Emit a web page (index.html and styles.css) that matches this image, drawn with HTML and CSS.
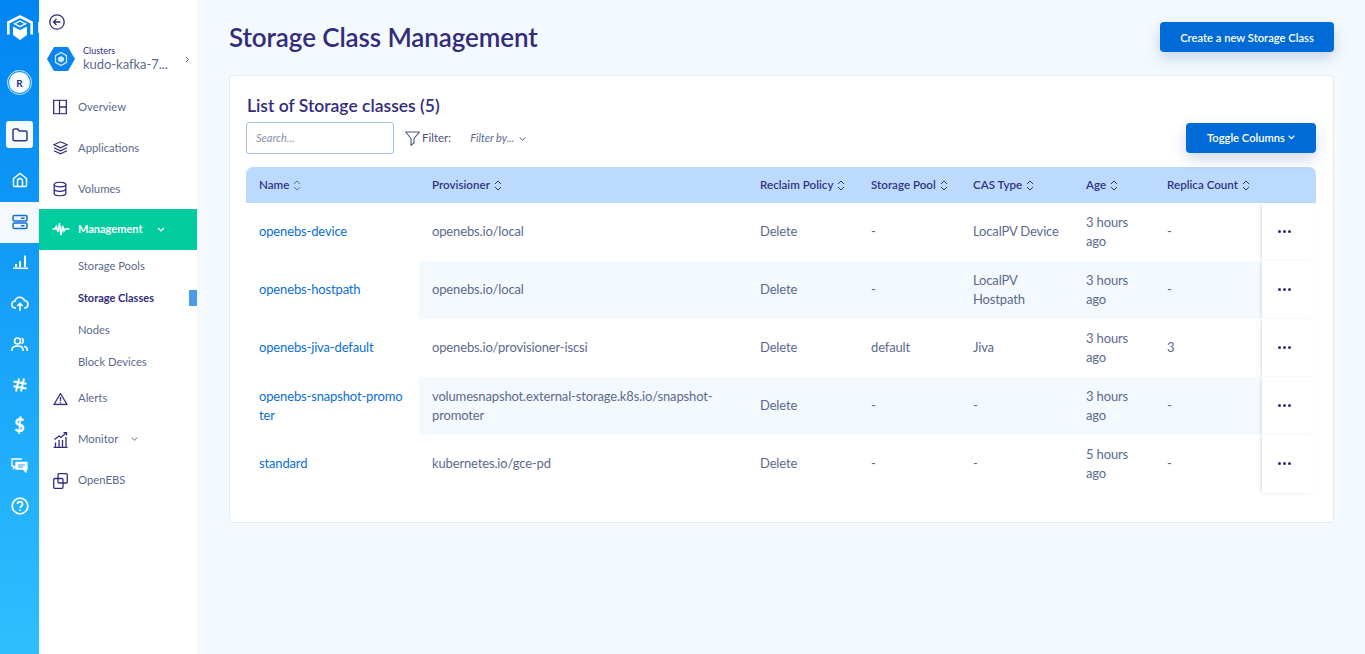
FILE: index.html
```html
<!DOCTYPE html>
<html lang="en">
<head>
<meta charset="utf-8">
<title>Storage Class Management</title>
<link rel="stylesheet" href="styles.css">
</head>
<body>
<div class="app">
  <aside class="rail">
    <div class="rail-logo">
      <svg width="26" height="26" viewBox="0 0 26 26"><path d="M1.300 19.500V7.500L13 1.500l11.700 6v12" fill="none" stroke="#fff" stroke-width="2.600"/><path d="M6 11.500l7 3.600 7-3.600V20l-7 5-7-5z" fill="#fff"/><path d="M7.500 8.800L13 6l5.500 2.800L13 11.600z" fill="none" stroke="#fff" stroke-width="1.400"/></svg>
    </div>
    <div class="rail-avatar"><span class="avatar-face">R</span></div>
    <a class="rail-folder">
      <svg width="16" height="14" viewBox="0 0 16 14"><path d="M1 2.500C1 1.600 1.600 1 2.500 1h3.200l1.600 2h6.200c.9 0 1.500.6 1.500 1.500v6.800c0 .9-.6 1.500-1.500 1.500h-10C1.600 12.800 1 12.200 1 11.300z" fill="none" stroke="#3b3680" stroke-width="1.500"/></svg>
    </a>
    <a class="rail-item">
      <svg width="16" height="16" viewBox="0 0 16 16" fill="none" stroke="#fff" stroke-width="1.500"><path d="M1.500 6.500L8 1.500l6.500 5v7a1 1 0 0 1-1 1h-11a1 1 0 0 1-1-1z"/><path d="M5.500 14.500V9a2.500 2.500 0 0 1 5 0v5.500"/></svg>
    </a>
    <a class="rail-item rail-active">
      <svg width="16" height="16" viewBox="0 0 16 16" fill="none" stroke="#0f6fd8" stroke-width="1.500"><rect x="1" y="1.500" width="14" height="5.500" rx="1.500"/><rect x="1" y="9" width="14" height="5.500" rx="1.500"/><path d="M9 4.200h3.500M9 11.800h3.500"/></svg>
    </a>
    <a class="rail-item">
      <svg width="16" height="16" viewBox="0 1 16 16" fill="#fff"><rect x="1" y="13.500" width="15" height="1.500"/><rect x="3" y="10" width="2" height="3"/><rect x="7" y="7" width="2" height="6"/><rect x="12" y="1.500" width="2" height="11.500"/></svg>
    </a>
    <a class="rail-item">
      <svg width="18" height="16" viewBox="0 0 18 16" fill="none" stroke="#fff" stroke-width="1.600"><path d="M5 12H4.500a3.500 3.500 0 0 1-.5-7A5 5 0 0 1 13.500 4.500a3.800 3.800 0 0 1 .5 7.500h-1"/><path d="M9 15V7.500M6.300 10L9 7.300 11.700 10"/></svg>
    </a>
    <a class="rail-item">
      <svg width="17" height="15" viewBox="0 0 17 15" fill="none" stroke="#fff" stroke-width="1.600"><circle cx="6.500" cy="4" r="3"/><path d="M1 14v-1.500c0-2 2-3.500 5.500-3.500s5.500 1.500 5.500 3.500V14"/><path d="M10.500 1.200a3 3 0 0 1 0 5.600M13 9.200c2 .4 3.200 1.600 3.200 3.300V14"/></svg>
    </a>
    <a class="rail-item">
      <svg width="16" height="16" viewBox="0 0 16 16" fill="none" stroke="#fff" stroke-width="2"><path d="M7 1.500L4 14.500M12 1.500L9 14.500M1.500 4.500l13 2.200M1.500 9.300l13 2.200"/></svg>
    </a>
    <a class="rail-item rail-dollar">$</a>
    <a class="rail-item">
      <svg width="17" height="15" viewBox="0 0 17 15" fill="none" stroke="#fff" stroke-width="1.300"><path d="M11 1H1v7h1.500v2.500L5 8"/><path d="M5 4.500h11V11h-1v3l-3-3H5z" fill="#fff"/><path d="M7 7h7M7 9h5" stroke="#1fa5fb" stroke-width="1"/></svg>
    </a>
    <a class="rail-item">
      <svg width="18" height="18" viewBox="0 0 18 18" fill="none" stroke="#fff" stroke-width="1.700"><circle cx="9" cy="9" r="7.800"/><path d="M6.500 7a2.500 2.500 0 1 1 3.700 2.200c-.8.500-1.200 1-1.200 1.800"/><path d="M9 12.600v1.400"/></svg>
    </a>
  </aside>
  <span class="rail-handle"></span>

  <nav class="side">
    <div class="side-back">
      <svg width="16" height="16" viewBox="0 0 16 16" fill="none" stroke="#312d7c" stroke-width="1.300"><circle cx="8" cy="8" r="7.200"/><path d="M11.500 8h-7M7.500 5L4.500 8l3 3"/></svg>
    </div>
    <div class="cluster">
      <svg class="cluster-hex" width="28" height="24" viewBox="0 0 28 24"><path d="M7 0h14l7 12-7 12H7L0 12z" fill="#0a84ee"/><path d="M14 5.500l5.500 3.200v6.600L14 18.500l-5.500-3.200V8.700z" fill="none" stroke="#d5ebff" stroke-width="1.200"/><path d="M14 9l3 1.700v3L14 15.500l-3-1.800v-3z" fill="#cfe7ff"/></svg>
      <div class="cluster-text">
        <span class="cluster-label">Clusters</span>
        <span class="cluster-name">kudo-kafka-7...</span>
      </div>
      <svg class="cluster-chevron" width="5" height="7" viewBox="0 0 5 7" fill="none" stroke="#5c6a8e" stroke-width="1"><path d="M1 1l2.500 2.500L1 6"/></svg>
    </div>
    <ul class="side-list">
      <li class="side-item">
        <svg class="side-icon" width="14" height="15" viewBox="0 0 14 15" fill="none" stroke="#312d7c" stroke-width="1.300"><rect x=".7" y=".7" width="12.600" height="13.600"/><path d="M6.500 .7v13.600M6.500 7.500h6.800"/></svg>
        <span>Overview</span>
      </li>
      <li class="side-item">
        <svg class="side-icon" width="15" height="14" viewBox="0 0 15 14" fill="none" stroke="#312d7c" stroke-width="1.200"><path d="M7.500 .8l6.500 3-6.500 3-6.500-3z"/><path d="M1 6.800l6.500 3 6.500-3M1 9.800l6.500 3 6.500-3"/></svg>
        <span>Applications</span>
      </li>
      <li class="side-item">
        <svg class="side-icon" width="14" height="15" viewBox="0 0 14 15" fill="none" stroke="#312d7c" stroke-width="1.300"><ellipse cx="7" cy="3" rx="5.800" ry="2.300"/><path d="M1.200 3v9c0 1.300 2.600 2.300 5.800 2.300s5.800-1 5.800-2.300V3M1.200 7.500c0 1.300 2.600 2.300 5.800 2.300s5.800-1 5.800-2.300"/></svg>
        <span>Volumes</span>
      </li>
      <li class="side-item side-current">
        <svg class="side-icon" width="18" height="14" viewBox="0 0 18 14" fill="none" stroke="#fff" stroke-width="1.500"><path d="M.5 7h2.500l1.200-2.500L6 10l1.500-9 1.500 12 1.700-9 1.300 5 1-2h4.500"/></svg>
        <span class="side-current-text">Management</span>
        <svg class="side-caret" width="8" height="5" viewBox="0 0 8 5" fill="none" stroke="#fff" stroke-width="1.200"><path d="M1 1l3 3 3-3"/></svg>
      </li>
      <li class="sub-item">Storage Pools</li>
      <li class="sub-item sub-current">Storage Classes<span class="sub-marker"></span></li>
      <li class="sub-item">Nodes</li>
      <li class="sub-item">Block Devices</li>
      <li class="side-item">
        <svg class="side-icon" width="15" height="13" viewBox="0 0 15 13" fill="none" stroke="#312d7c" stroke-width="1.300"><path d="M7.500 1L14 12H1z" stroke-linejoin="round"/><path d="M7.500 4.500v4M7.500 9.500v1.200"/></svg>
        <span>Alerts</span>
      </li>
      <li class="side-item">
        <svg class="side-icon" width="15" height="16" viewBox="0 0 15 16" fill="none" stroke="#312d7c" stroke-width="1.300"><path d="M.5 15.300h14M2.500 15V10.500M6 15V8M9.500 15V8M13 15V5"/><path d="M1.500 7.500L6 4l2 1.500L13 1"/><path d="M10.500 .7H13.500V3.500"/></svg>
        <span>Monitor</span>
        <svg class="side-caret side-caret-muted" width="7" height="4" viewBox="0 0 7 4" fill="none" stroke="#5c6a8e" stroke-width="1"><path d="M.7 .5l2.800 2.800L6.300 .5"/></svg>
      </li>
      <li class="side-item">
        <svg class="side-icon" width="15" height="16" viewBox="0 0 15 16" fill="none" stroke="#312d7c" stroke-width="1.300"><rect x="5" y=".7" width="9.300" height="9.300" rx="1"/><rect x=".7" y="5.500" width="9.300" height="9.800" rx="1"/></svg>
        <span>OpenEBS</span>
      </li>
    </ul>
  </nav>

  <main class="main">
    <header class="page-head">
      <h1 class="page-title">Storage Class Management</h1>
      <button class="btn btn-create">Create a new Storage Class</button>
    </header>
    <section class="card">
      <h2 class="card-title">List of Storage classes (5)</h2>
      <div class="toolbar">
        <input class="search" type="text" placeholder="Search...">
        <svg class="filter-icon" width="15" height="15" viewBox="0 0 15 15" fill="none" stroke="#4b5578" stroke-width="1.100"><path d="M.7 1h13.600L9 7.500V12l-3 2.400V7.500z" stroke-linejoin="round"/></svg>
        <span class="filter-label">Filter:</span>
        <span class="filter-by">Filter by...</span>
        <svg class="filter-caret" width="7" height="4" viewBox="0 0 7 4" fill="none" stroke="#4b5578" stroke-width="1"><path d="M.7 .5l2.800 2.800L6.300 .5"/></svg>
        <button class="btn btn-toggle">Toggle Columns<svg class="btn-caret" width="7" height="5" viewBox="0 0 7 5" fill="none" stroke="#fff" stroke-width="1.300"><path d="M.7 .8l2.800 2.800L6.300 .8"/></svg></button>
      </div>
      <table class="grid">
        <colgroup>
          <col class="c-name"><col class="c-prov"><col class="c-reclaim"><col class="c-pool"><col class="c-cas"><col class="c-age"><col class="c-replica"><col class="c-actions">
        </colgroup>
        <thead>
          <tr>
            <th>Name <svg class="sort" viewBox="0 0 8 11" fill="none" stroke-width="1"><path d="M1 4l3-3 3 3" stroke="#5a6a9c"/><path d="M1 7l3 3 3-3" stroke="#3b82e0"/></svg></th>
            <th>Provisioner <svg class="sort" viewBox="0 0 8 11" fill="none" stroke="#34347e" stroke-width="1"><path d="M1 4l3-3 3 3M1 7l3 3 3-3"/></svg></th>
            <th>Reclaim Policy <svg class="sort" viewBox="0 0 8 11" fill="none" stroke="#34347e" stroke-width="1"><path d="M1 4l3-3 3 3M1 7l3 3 3-3"/></svg></th>
            <th>Storage Pool <svg class="sort" viewBox="0 0 8 11" fill="none" stroke="#34347e" stroke-width="1"><path d="M1 4l3-3 3 3M1 7l3 3 3-3"/></svg></th>
            <th>CAS Type <svg class="sort" viewBox="0 0 8 11" fill="none" stroke="#34347e" stroke-width="1"><path d="M1 4l3-3 3 3M1 7l3 3 3-3"/></svg></th>
            <th>Age <svg class="sort" viewBox="0 0 8 11" fill="none" stroke="#34347e" stroke-width="1"><path d="M1 4l3-3 3 3M1 7l3 3 3-3"/></svg></th>
            <th>Replica Count <svg class="sort" viewBox="0 0 8 11" fill="none" stroke="#34347e" stroke-width="1"><path d="M1 4l3-3 3 3M1 7l3 3 3-3"/></svg></th>
            <th></th>
          </tr>
        </thead>
        <tbody>
          <tr>
            <td class="cell-name"><a>openebs-device</a></td><td>openebs.io/local</td><td>Delete</td><td>-</td><td>LocalPV Device</td><td>3 hours ago</td><td>-</td>
            <td class="cell-actions"><div class="actions"><span class="dots"><i></i><i></i><i></i></span></div></td>
          </tr>
          <tr>
            <td class="cell-name"><a>openebs-hostpath</a></td><td>openebs.io/local</td><td>Delete</td><td>-</td><td>LocalPV Hostpath</td><td>3 hours ago</td><td>-</td>
            <td class="cell-actions"><div class="actions"><span class="dots"><i></i><i></i><i></i></span></div></td>
          </tr>
          <tr>
            <td class="cell-name"><a>openebs-jiva-default</a></td><td>openebs.io/provisioner-iscsi</td><td>Delete</td><td>default</td><td>Jiva</td><td>3 hours ago</td><td>3</td>
            <td class="cell-actions"><div class="actions"><span class="dots"><i></i><i></i><i></i></span></div></td>
          </tr>
          <tr>
            <td class="cell-name"><a>openebs-snapshot-promoter</a></td><td>volumesnapshot.external-storage.k8s.io/snapshot-promoter</td><td>Delete</td><td>-</td><td>-</td><td>3 hours ago</td><td>-</td>
            <td class="cell-actions"><div class="actions"><span class="dots"><i></i><i></i><i></i></span></div></td>
          </tr>
          <tr>
            <td class="cell-name"><a>standard</a></td><td>kubernetes.io/gce-pd</td><td>Delete</td><td>-</td><td>-</td><td>5 hours ago</td><td>-</td>
            <td class="cell-actions"><div class="actions"><span class="dots"><i></i><i></i><i></i></span></div></td>
          </tr>
        </tbody>
      </table>
    </section>
  </main>
</div>
</body>
</html>
```

FILE: styles.css
```css
* { box-sizing: border-box; }
html, body { margin: 0; height: 100%; overflow: hidden; }
body { font-family: "Lato", "Open Sans", sans-serif; color: #5c6a8e; background: #f4f9fd; }
a { color: inherit; text-decoration: none; }
ul { list-style: none; margin: 0; padding: 0; }

.app { display: flex; height: 100vh; position: relative; }

/* icon rail */
.rail { width: 39px; flex: none; display: flex; flex-direction: column; align-items: center; background: linear-gradient(180deg, #0085f2 0%, #2fbfff 100%); }
.rail-logo { height: 26px; margin-top: 15px; }
.rail-avatar { margin-top: 29px; width: 25px; height: 25px; border-radius: 50%; border: 1px solid #cfe9ff; display: flex; align-items: center; justify-content: center; }
.avatar-face { width: 21px; height: 21px; border-radius: 50%; background: #f4f9fd; color: #312d7c; font-size: 10px; font-weight: 700; display: flex; align-items: center; justify-content: center; }
.rail-folder { margin-top: 26px; margin-bottom: 12px; width: 27px; height: 27px; border-radius: 3px; background: #f4f9fd; display: flex; align-items: center; justify-content: center; }
.rail-item { width: 100%; height: 40.500px; flex: none; display: flex; align-items: center; justify-content: center; color: #fff; }
.rail-active { height: 41px; margin-top: 1.500px; padding-bottom: 2px; background: #f4f9fd; }
.rail-dollar { font-size: 18px; font-weight: 900; }
.rail-handle { position: absolute; left: 38px; top: 22px; width: 1px; height: 11px; background: #d5e6f5; }

/* secondary nav */
.side { width: 158px; flex: none; background: #fff; }
.side-back { height: 45px; padding: 14px 0 0 10px; }
.cluster { display: flex; align-items: center; height: 28px; padding-left: 8px; }
.cluster-hex { flex: none; }
.cluster-text { display: flex; flex-direction: column; margin-left: 8px; width: 100px; }
.cluster-label { font-size: 9px; line-height: 11px; color: #312d7c; }
.cluster-name { font-size: 13px; line-height: 17px; color: #5c6a8e; letter-spacing: -.05px; white-space: nowrap; }
.cluster-chevron { margin-left: 2px; }
.side-list { margin-top: 13px; }
.side-item { position: relative; height: 41px; display: flex; align-items: center; padding-left: 39px; font-size: 11.300px; color: #5c6a8e; }
.sub-item ~ .side-item { padding-bottom: 2px; }
.side-icon { position: absolute; left: 14px; top: 50%; transform: translateY(-50%); }
.side-current { background: #00cc9f; color: #fff; font-weight: 700; padding-bottom: 2px; font-size: 11px; }
.side-current .side-icon { left: 13px; margin-top: -1px; }
.side-current-text { margin-right: 14px; }
.side-current .side-caret { margin-top: 2px; }
.side-caret-muted { margin-left: 13px; }
.sub-item { position: relative; height: 32px; display: flex; align-items: center; padding: 0 0 2px 39px; font-size: 11.200px; color: #5c6a8e; }
.sub-current { color: #312d7c; font-weight: 700; font-size: 11px; }
.sub-marker { position: absolute; right: 0; top: 8px; width: 8px; height: 16px; background: #4c9be8; }

/* main */
.main { flex: 1; min-width: 0; padding: 22px 31px 0 32px; background: #f4f9fd; }
.page-head { display: flex; justify-content: space-between; align-items: center; height: 30px; margin-bottom: 23px; }
.page-title { margin: 0; font-size: 26px; font-weight: 600; letter-spacing: -.1px; color: #312d7c; }
.btn { border: 0; border-radius: 4px; background: #006ad6; color: #fff; font-family: inherit; font-size: 11.200px; font-weight: 600; height: 30px; box-shadow: 0 6px 14px rgba(30, 80, 160, .22); }
.btn-create { width: 174px; }
.btn-toggle { width: 130px; margin-left: auto; margin-top: -1px; display: inline-flex; align-items: center; justify-content: center; }
.btn-caret { margin-left: 3px; }

.card { height: 448px; padding: 18px 17px 0 16px; background: #fff; border: 1px solid #e5ecf3; border-radius: 4px; }
.card-title { margin: 0 0 5px 1px; font-size: 17.500px; line-height: 23px; font-weight: 600; color: #312d7c; }
.toolbar { display: flex; align-items: center; height: 32px; margin-bottom: 13px; }
.search { width: 148px; height: 32px; padding: 0 9px 2px; border: 1px solid #a7c0de; border-radius: 3px; outline: 0; background: #fff; font-family: inherit; font-size: 11px; font-style: italic; color: #5c6a8e; }
.search::placeholder { color: #8a94ae; opacity: 1; }
.filter-icon { margin-left: 11px; }
.filter-label { margin: 0 0 2px 2px; font-size: 11.500px; color: #4b5578; }
.filter-by { margin: 0 0 2px 19px; font-size: 11px; font-style: italic; color: #5c6a8e; }
.filter-caret { margin: 2px 0 0 5px; }

.grid { width: 1070px; border-collapse: separate; border-spacing: 0; table-layout: fixed; font-size: 13px; letter-spacing: -.15px; }
.c-name { width: 173px; }
.c-prov { width: 328px; }
.c-reclaim { width: 111px; }
.c-pool { width: 102px; }
.c-cas { width: 113px; }
.c-age { width: 81px; }
.c-replica { width: 107px; }
.c-actions { width: 55px; }
.grid th { height: 36px; padding: 0 0 2px 13px; background: #bbdafe; text-align: left; font-size: 11.600px; font-weight: 600; letter-spacing: 0; color: #34347e; white-space: nowrap; }
.grid th:first-child { border-top-left-radius: 7px; }
.grid th:last-child { border-top-right-radius: 7px; }
.sort { width: 8px; height: 11px; vertical-align: -2px; margin-left: 1px; }
.grid td { height: 58px; padding: 0 10px 1px 13px; line-height: 19px; color: #5c6a8e; }
.grid tbody tr:nth-child(even) td { background: #f4f9fd; }
.grid tbody tr td.cell-name { background: #fff; word-break: break-all; color: #0a6fd6; padding-right: 13px; }
.grid tbody tr td.cell-actions { background: #fff; padding: 0; }
.actions { width: 51px; height: 58px; margin-left: 1px; padding: 0 0 1px 16px; display: flex; align-items: center; background: #fff; box-shadow: -2px 0 3px -1px rgba(80, 100, 140, .22), 0 1px 2px rgba(80, 100, 140, .06); }
.dots { display: flex; gap: 2px; }
.dots i { width: 3px; height: 3px; border-radius: 50%; background: #312d7c; }
```
